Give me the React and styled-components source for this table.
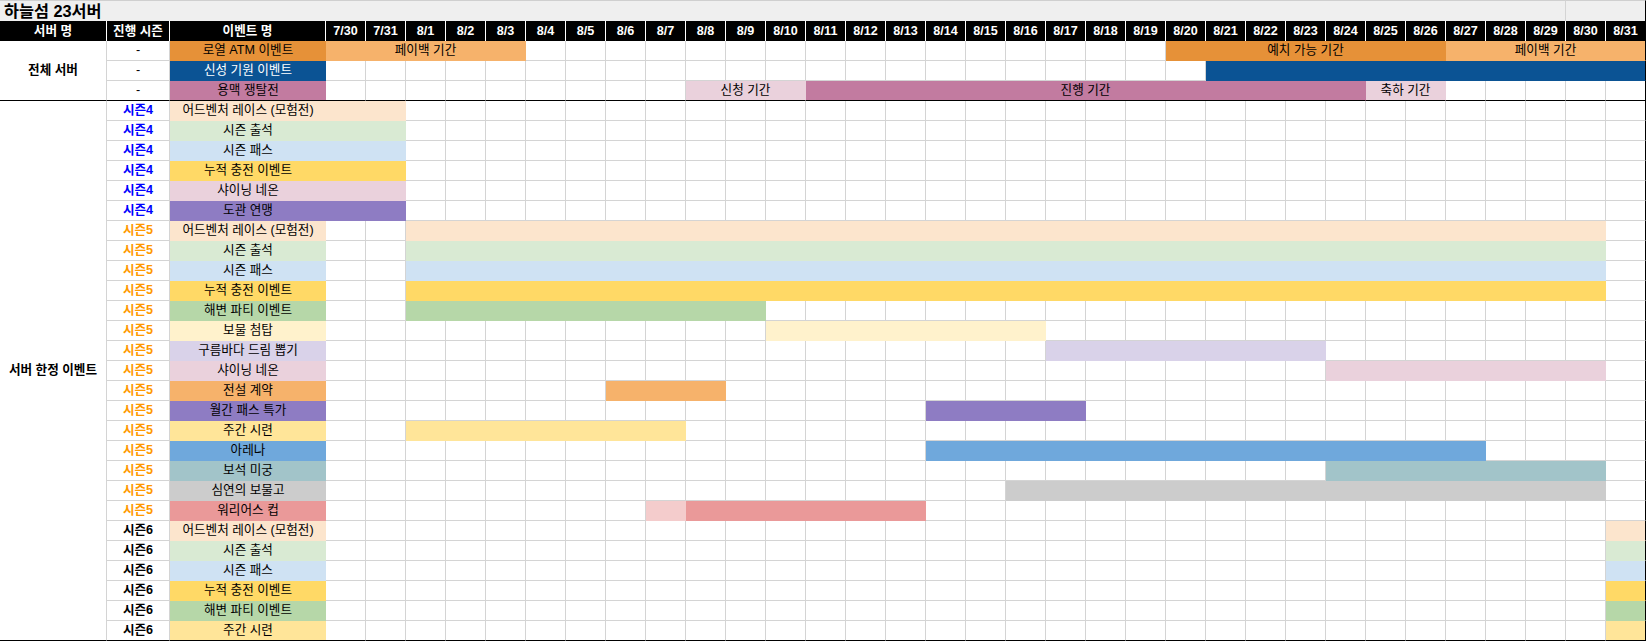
import React from 'react';
import styled, { createGlobalStyle, css } from 'styled-components';

const GlobalStyle = createGlobalStyle`
    html, body {
        margin: 0;
        padding: 0;
        background: #fff;
    }
    body {
        font-family: "Liberation Sans", "Noto Sans CJK KR", sans-serif;
        color: #000;
    }
`;

const GRID = '#d4d4d4';

const Sheet = styled.div`
    display: grid;
    grid-template-columns: 107px 63px 156px repeat(33, 40px);
    grid-template-rows: 21px;
    grid-auto-rows: 20px;
    width: 1646px;
`;

const cellBase = css`
    box-sizing: border-box;
    display: flex;
    align-items: center;
    justify-content: center;
    overflow: hidden;
    white-space: nowrap;
    font-size: 12.6px;
    line-height: 1;
`;

const TitleBar = styled.div`
    ${cellBase};
    grid-column: span 34;
    justify-content: flex-start;
    padding-left: 4px;
    background: #efefef;
    border-top: 1px solid #cfcfcf;
    border-right: 1px solid ${GRID};
    font-size: 16.3px;
    font-weight: bold;
`;

const TitleTail = styled.div`
    ${cellBase};
    grid-column: span 2;
    background: #efefef;
    border-top: 1px solid #cfcfcf;
    border-right: 1px solid #000;
`;

const HeadCell = styled.div`
    ${cellBase};
    background: #000;
    color: #fff;
    font-weight: bold;
    border-right: 1px solid ${p => (p.$end ? '#000' : '#fff')};
`;

const GroupCell = styled.div`
    ${cellBase};
    grid-row: span ${p => p.$rows};
    background: #fff;
    font-weight: bold;
    border-right: 1px solid ${GRID};
    border-bottom: 1px solid #000;
`;

const SeasonCell = styled.div`
    ${cellBase};
    color: ${p => p.$color || '#000'};
    font-weight: ${p => (p.$bold ? 'bold' : 'normal')};
    background: #fff;
    border-right: 1px solid ${GRID};
    border-bottom: 1px solid ${p => (p.$last ? '#000' : GRID)};
`;

const NameCell = styled.div`
    ${cellBase};
    background: ${p => p.$fill};
    color: ${p => p.$ink || '#000'};
    border-bottom: 1px solid ${p => (p.$last ? '#000' : 'transparent')};
`;

const DayCell = styled.div`
    ${cellBase};
    background: #fff;
    border-right: 1px solid ${p => (p.$end ? '#000' : GRID)};
    border-bottom: 1px solid ${p => (p.$last ? '#000' : GRID)};
`;

const Bar = styled.div`
    ${cellBase};
    grid-column: span ${p => p.$span};
    background: ${p => p.$fill};
    border-right: 1px solid ${p => (p.$end ? '#000' : 'transparent')};
    border-bottom: 1px solid ${p => (p.$last ? '#000' : 'transparent')};
`;

const DAYS = ['7/30', '7/31', ...Array.from({ length: 31 }, (_, i) => `8/${i + 1}`)];
const LAST_DAY = DAYS.length - 1;

const C = {
    peach: '#fce5cd',
    green: '#d9ead3',
    sky: '#cfe2f3',
    gold: '#ffd966',
    pink: '#ead1dc',
    purple: '#8e7cc3',
    leaf: '#b6d7a8',
    cream: '#fff2cc',
    lilac: '#d9d2e9',
    apricot: '#f6b26b',
    butter: '#ffe599',
    blue: '#6fa8dc',
    teal: '#a2c4c9',
    gray: '#cccccc',
    rose: '#ea9999',
    blush: '#f4cccc',
    orange: '#e69138',
    navy: '#0b5394',
    mauve: '#c27ba0',
};

const SEASONS = {
    '-': { color: '#000', bold: false },
    '시즌4': { color: '#0000ff', bold: true },
    '시즌5': { color: '#ff9900', bold: true },
    '시즌6': { color: '#000', bold: true },
};

const ev = (season, name, fill, segs) => ({ season, name, fill, segs });

const groups = [
    {
        label: '전체 서버',
        rows: [
            ev('-', '로열 ATM 이벤트', C.orange, [
                [0, 4, C.apricot, '페이백 기간'],
                [21, 27, C.orange, '예치 가능 기간'],
                [28, 32, C.apricot, '페이백 기간'],
            ]),
            { ...ev('-', '신성 기원 이벤트', C.navy, [[22, 32, C.navy]]), ink: '#fff' },
            ev('-', '용맥 쟁탈전', C.mauve, [
                [9, 11, C.pink, '신청 기간'],
                [12, 25, C.mauve, '진행 기간'],
                [26, 27, C.pink, '축하 기간'],
            ]),
        ],
    },
    {
        label: '서버 한정 이벤트',
        rows: [
            ev('시즌4', '어드벤처 레이스 (모험전)', C.peach, [[0, 1]]),
            ev('시즌4', '시즌 출석', C.green, [[0, 1]]),
            ev('시즌4', '시즌 패스', C.sky, [[0, 1]]),
            ev('시즌4', '누적 충전 이벤트', C.gold, [[0, 1]]),
            ev('시즌4', '샤이닝 네온', C.pink, [[0, 1]]),
            ev('시즌4', '도관 연맹', C.purple, [[0, 1]]),
            ev('시즌5', '어드벤처 레이스 (모험전)', C.peach, [[2, 31]]),
            ev('시즌5', '시즌 출석', C.green, [[2, 31]]),
            ev('시즌5', '시즌 패스', C.sky, [[2, 31]]),
            ev('시즌5', '누적 충전 이벤트', C.gold, [[2, 31]]),
            ev('시즌5', '해변 파티 이벤트', C.leaf, [[2, 10]]),
            ev('시즌5', '보물 첨탑', C.cream, [[11, 17]]),
            ev('시즌5', '구름바다 드림 뽑기', C.lilac, [[18, 24]]),
            ev('시즌5', '샤이닝 네온', C.pink, [[25, 31]]),
            ev('시즌5', '전설 계약', C.apricot, [[7, 9]]),
            ev('시즌5', '월간 패스 특가', C.purple, [[15, 18]]),
            ev('시즌5', '주간 시련', C.butter, [[2, 8]]),
            ev('시즌5', '아레나', C.blue, [[15, 28]]),
            ev('시즌5', '보석 미궁', C.teal, [[25, 31]]),
            ev('시즌5', '심연의 보물고', C.gray, [[17, 31]]),
            ev('시즌5', '워리어스 컵', C.rose, [[8, 8, C.blush], [9, 14]]),
            ev('시즌6', '어드벤처 레이스 (모험전)', C.peach, [[32, 32]]),
            ev('시즌6', '시즌 출석', C.green, [[32, 32]]),
            ev('시즌6', '시즌 패스', C.sky, [[32, 32]]),
            ev('시즌6', '누적 충전 이벤트', C.gold, [[32, 32]]),
            ev('시즌6', '해변 파티 이벤트', C.leaf, [[32, 32]]),
            ev('시즌6', '주간 시련', C.butter, [[32, 32]]),
        ],
    },
];

// walk the 33 days, emitting bars for the segments and plain cells in between
function Timeline({ row, last, rowKey }) {
    const out = [];
    let day = 0;
    const segs = [...row.segs].sort((a, b) => a[0] - b[0]);
    segs.forEach(([from, to, fill, label], i) => {
        for (; day < from; day++) {
            out.push(<DayCell key={`${rowKey}-d${day}`} $last={last} $end={day === LAST_DAY} />);
        }
        out.push(
            <Bar
                key={`${rowKey}-s${i}`}
                $span={to - from + 1}
                $fill={fill || row.fill}
                $last={last}
                $end={to === LAST_DAY}
            >
                {label}
            </Bar>
        );
        day = to + 1;
    });
    for (; day <= LAST_DAY; day++) {
        out.push(<DayCell key={`${rowKey}-d${day}`} $last={last} $end={day === LAST_DAY} />);
    }
    return out;
}

export default function App() {
    return (
        <React.Fragment>
            <GlobalStyle />
            <Sheet>
                <TitleBar>하늘섬 23서버</TitleBar>
                <TitleTail />

                <HeadCell>서버 명</HeadCell>
                <HeadCell>진행 시즌</HeadCell>
                <HeadCell>이벤트 명</HeadCell>
                {DAYS.map((d, i) => (
                    <HeadCell key={d} $end={i === LAST_DAY}>{d}</HeadCell>
                ))}

                {groups.map((group, g) => (
                    <React.Fragment key={group.label}>
                        <GroupCell $rows={group.rows.length}>{group.label}</GroupCell>
                        {group.rows.map((row, r) => {
                            const last = r === group.rows.length - 1;
                            const season = SEASONS[row.season];
                            const key = `${g}-${r}`;
                            return (
                                <React.Fragment key={key}>
                                    <SeasonCell $color={season.color} $bold={season.bold} $last={last}>
                                        {row.season}
                                    </SeasonCell>
                                    <NameCell $fill={row.fill} $ink={row.ink} $last={last}>
                                        {row.name}
                                    </NameCell>
                                    {Timeline({ row, last, rowKey: key })}
                                </React.Fragment>
                            );
                        })}
                    </React.Fragment>
                ))}
            </Sheet>
        </React.Fragment>
    );
}
